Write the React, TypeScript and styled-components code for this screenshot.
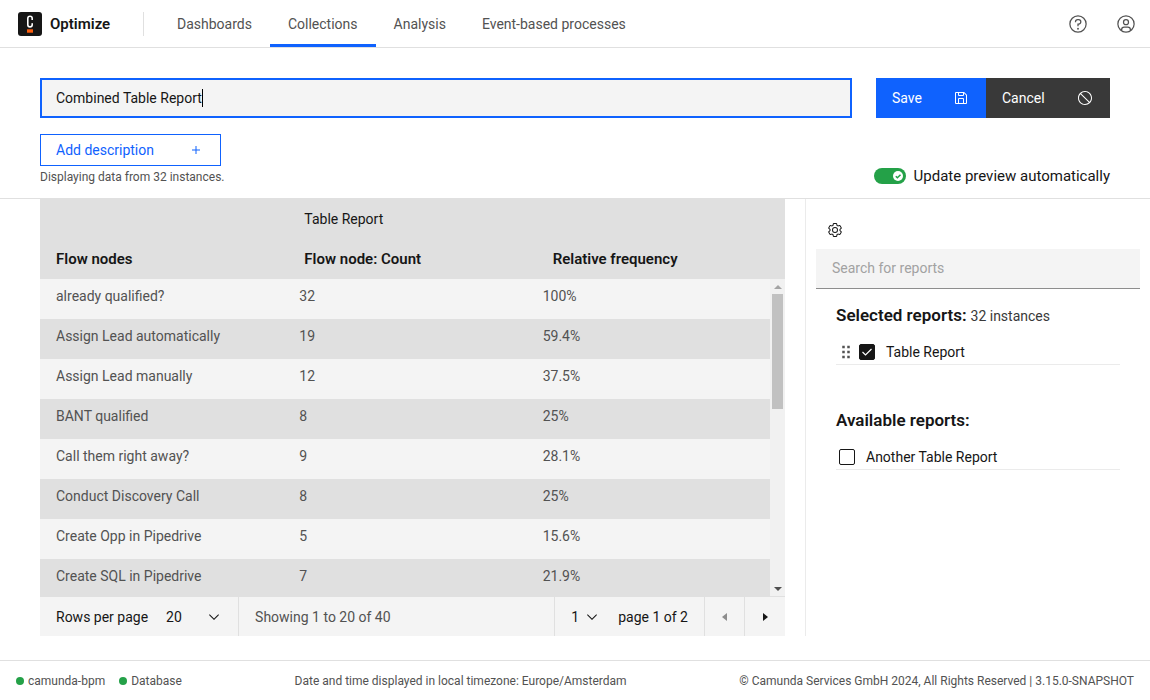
import React, { useLayoutEffect, useRef, useState } from "react";
import styled, { createGlobalStyle, css } from "styled-components";

const GlobalStyle = createGlobalStyle`
  *, *::before, *::after { box-sizing: border-box; }
  html, body { margin: 0; padding: 0; }
  body {
    background: #fff;
    color: #161616;
    font-family: Roboto, "Liberation Sans", sans-serif;
    font-size: 14px;
    line-height: 18px;
  }
  button, input, select { font: inherit; color: inherit; margin: 0; border-radius: 0; }
  button { cursor: pointer; }
`;

const Page = styled.div`
  display: flex;
  flex-direction: column;
  height: 100vh;
`;

const Header = styled.header`
  display: flex;
  flex: none;
  align-items: stretch;
  height: 48px;
  padding: 0 12px 0 18px;
  border-bottom: 1px solid #e0e0e0;
`;

const Brand = styled.a`
  display: flex;
  align-items: center;
  gap: 8px;
  width: 125px;
  color: #161616;
  font-size: 15px;
  font-weight: 600;
  text-decoration: none;
`;

const HeaderDivider = styled.div`
  align-self: center;
  width: 1px;
  height: 24px;
  margin-right: 15px;
  background: #e0e0e0;
`;

const Nav = styled.nav`
  display: flex;
  flex: 1;
`;

const NavLink = styled.a<{ $active?: boolean }>`
  display: flex;
  align-items: center;
  padding: 3px 18px 0;
  border-bottom: 3px solid ${(p) => (p.$active ? "#0f62fe" : "transparent")};
  color: #525252;
  text-decoration: none;
`;

const HeaderActions = styled.div`
  display: flex;
  align-items: center;
  gap: 24px;
`;

const IconButton = styled.button`
  display: flex;
  align-items: center;
  justify-content: center;
  width: 24px;
  height: 24px;
  padding: 0;
  border: 0;
  background: none;
  color: #525252;
`;

const ReportHead = styled.section`
  display: flex;
  flex: none;
  flex-direction: column;
  gap: 16px;
  padding: 30px 40px 13px;
  border-bottom: 1px solid #e0e0e0;
`;

const NameRow = styled.div`
  display: flex;
  gap: 24px;
`;

const NameField = styled.div`
  position: relative;
  flex: 1;
`;

const NameInput = styled.input`
  width: 100%;
  height: 40px;
  padding: 0 14px;
  border: 2px solid #0f62fe;
  background: #f4f4f4;
  outline: none;
  caret-color: transparent;
`;

const Caret = styled.span`
  position: absolute;
  top: 11px;
  width: 1px;
  height: 18px;
  background: #000;
`;

const ButtonSet = styled.div`
  display: flex;
`;

const ActionButton = styled.button<{ $kind: "primary" | "secondary" }>`
  display: flex;
  align-items: center;
  justify-content: space-between;
  width: ${(p) => (p.$kind === "primary" ? 110 : 124)}px;
  height: 40px;
  padding: 0 17px 0 16px;
  border: 0;
  background: ${(p) => (p.$kind === "primary" ? "#0f62fe" : "#393939")};
  color: #fff;
`;

const DetailRow = styled.div`
  display: flex;
  align-items: flex-end;
  justify-content: space-between;
`;

const Details = styled.div`
  display: flex;
  flex-direction: column;
  align-items: flex-start;
  gap: 3px;
`;

const DescriptionButton = styled.button`
  display: flex;
  align-items: center;
  justify-content: space-between;
  width: 181px;
  height: 32px;
  padding: 0 16px 0 15px;
  border: 1px solid #0f62fe;
  background: #fff;
  color: #0f62fe;
`;

const SmallText = styled.span`
  color: #525252;
  font-size: 12px;
  line-height: 16px;
`;

const ToggleLabel = styled.label`
  display: flex;
  align-items: center;
  gap: 8px;
  font-size: 15px;
`;

const Toggle = styled.span`
  position: relative;
  display: block;
  width: 32px;
  height: 16px;
`;

const ToggleInput = styled.input`
  display: block;
  appearance: none;
  width: 32px;
  height: 16px;
  border-radius: 8px;
  background: #8d8d8d;
  &:checked { background: #24a148; }
`;

const ToggleKnob = styled.svg`
  position: absolute;
  top: 3px;
  right: 3px;
  pointer-events: none;
`;

const Content = styled.main`
  display: flex;
  flex: 1;
  min-height: 0;
  padding: 0 0 24px 40px;
`;

const TableArea = styled.section`
  display: flex;
  flex: 1;
  flex-direction: column;
  min-width: 0;
`;

const TableFrame = styled.div`
  position: relative;
  display: flex;
  flex: 1;
  min-height: 0;
`;

const Table = styled.table`
  display: flex;
  flex: 1;
  flex-direction: column;
  min-height: 0;
`;

const THead = styled.thead`
  display: block;
  background: #e0e0e0;
`;

const TBody = styled.tbody`
  display: block;
  flex: 1;
  padding-right: 15px;
  overflow-y: auto;
  scrollbar-width: none;
  background: #f4f4f4;
`;

const Row = styled.tr`
  display: grid;
  grid-template-columns: repeat(3, minmax(0, 1fr));
  height: 40px;
  ${TBody} &:nth-child(even) { background: #e0e0e0; }
`;

const cellBase = css`
  padding: 8px 16px;
  text-align: left;
`;

const HeadCell = styled.th<{ $group?: boolean }>`
  ${cellBase}
  padding-top: 11px;
  font-size: ${(p) => (p.$group ? 14 : 15)}px;
  font-weight: ${(p) => (p.$group ? 400 : 600)};
`;

const Cell = styled.td`
  ${cellBase}
  color: #525252;
`;

/* Drawn over the right edge of the scrolling rows, below the two header rows. */
const ScrollBar = styled.div`
  position: absolute;
  top: 80px;
  right: 0;
  bottom: 0;
  display: flex;
  flex-direction: column;
  align-items: center;
  width: 15px;
  background: #f1f1f1;
`;

const ScrollArrow = styled.span<{ $up?: boolean }>`
  display: flex;
  flex: none;
  align-items: center;
  height: 15px;
  &::before {
    content: "";
    border: 4px solid transparent;
    border-width: ${(p) => (p.$up ? "0 4px 4px" : "4px 4px 0")};
    border-bottom-color: #a3a3a3;
    border-top-color: #505050;
  }
`;

const ScrollTrack = styled.div`
  flex: 1;
  width: 11px;
`;

const ScrollThumb = styled.div`
  height: 40%;
  background: #c1c1c1;
`;

const Pagination = styled.div`
  display: flex;
  flex: none;
  height: 40px;
  padding-right: 1px;
  border-top: 1px solid #e0e0e0;
  background: #f4f4f4;
`;

const PageGroup = styled.div<{ $grow?: boolean }>`
  display: flex;
  flex: ${(p) => (p.$grow ? 1 : "none")};
  align-items: center;
  padding: 0 16px;
  color: ${(p) => (p.$grow ? "#525252" : "#161616")};
  & + & { border-left: 1px solid #e0e0e0; }
`;

const SelectField = styled.span<{ $width: number }>`
  position: relative;
  display: flex;
  align-items: center;
  width: ${(p) => p.$width}px;
`;

const Select = styled.select`
  appearance: none;
  width: 100%;
  height: 38px;
  padding: 0;
  border: 0;
  background: none;
`;

const SelectIcon = styled.span`
  position: absolute;
  right: 0;
  display: flex;
  pointer-events: none;
`;

const RowsLabel = styled.label`
  margin-right: 18px;
`;

const PageCount = styled.span`
  margin-left: 18px;
`;

const PageButton = styled.button`
  display: flex;
  align-items: center;
  justify-content: center;
  width: 40px;
  padding: 0;
  border: 0;
  border-left: 1px solid #e0e0e0;
  background: none;
  color: #161616;
  &:disabled { color: #8d8d8d; }
`;

const Panel = styled.aside`
  flex: 0 0 345px;
  margin-left: 20px;
  padding: 19px 10px 0;
  border-left: 1px solid #ebebeb;
`;

const PanelTools = styled.div`
  display: flex;
  height: 31px;
  padding: 0 7px;
  ${IconButton} { color: #161616; }
`;

const SearchInput = styled.input`
  display: block;
  width: 100%;
  height: 40px;
  padding: 0 16px 1px;
  border: 0;
  border-bottom: 1px solid #8d8d8d;
  background: #f4f4f4;
  outline: none;
  &::placeholder { color: #a2a2a2; opacity: 1; }
`;

const ReportGroup = styled.section`
  margin: 15px 20px 44px;
`;

const GroupTitle = styled.h3`
  display: flex;
  align-items: baseline;
  gap: 4px;
  height: 22px;
  margin: 0;
  font-size: 17px;
  font-weight: 600;
  line-height: 22px;
`;

const GroupNote = styled.span`
  font-size: 14px;
  font-weight: 400;
  color: #393939;
`;

const ReportList = styled.ul`
  margin: 15px 0 0;
  padding: 0;
  list-style: none;
`;

const ReportItem = styled.li<{ $draggable?: boolean }>`
  display: flex;
  align-items: center;
  gap: 3px;
  height: 24px;
  padding: 0 0 2px ${(p) => (p.$draggable ? 0 : 3)}px;
  border-bottom: 1px solid #ebebeb;
`;

const DragHandle = styled.span`
  display: flex;
  color: #525252;
  cursor: grab;
`;

const CheckLabel = styled.label`
  position: relative;
  display: flex;
  align-items: center;
  gap: 11px;
`;

const Checkbox = styled.input`
  appearance: none;
  width: 16px;
  height: 16px;
  border: 1px solid #161616;
  border-radius: 2px;
  &:checked { background: #161616; }
`;

const CheckMark = styled.svg`
  position: absolute;
  left: 0;
  pointer-events: none;
`;

const Footer = styled.footer`
  display: flex;
  flex: none;
  align-items: center;
  justify-content: space-between;
  height: 40px;
  padding: 0 16px;
  border-top: 1px solid #e0e0e0;
`;

const StatusList = styled.div`
  display: flex;
  gap: 14px;
`;

const Status = styled(SmallText)`
  display: flex;
  align-items: center;
  gap: 4px;
  &::before {
    content: "";
    width: 8px;
    height: 8px;
    border-radius: 50%;
    background: #24a148;
  }
`;

const icons = {
  add: "M17 15V8h-2v7H8v2h7v7h2v-7h7v-2z",
  save: "M27.71,9.29l-5-5A1,1,0,0,0,22,4H6A2,2,0,0,0,4,6V26a2,2,0,0,0,2,2H26a2,2,0,0,0,2-2V10A1,1,0,0,0,27.71,9.29ZM12,6h8v4H12Zm8,20H12V18h8Zm2,0V18a2,2,0,0,0-2-2H12a2,2,0,0,0-2,2v8H6V6h4v4a2,2,0,0,0,2,2h8a2,2,0,0,0,2-2V6.41l4,4V26Z",
  cancel: "M16 2C8.2 2 2 8.2 2 16s6.2 14 14 14 14-6.2 14-14S23.8 2 16 2zM4 16C4 13 5.1 10.3 6.9 8.3L23.7 25.1A11.9 11.9 0 0 1 16 28C9.4 28 4 22.6 4 16zM25.1 23.7L8.3 6.9A11.9 11.9 0 0 1 16 4c6.6 0 12 5.4 12 12 0 3-1.1 5.7-2.9 7.7z",
  chevron: "M16 22L6 12 7.4 10.6 16 19.2 24.6 10.6 26 12z",
  caretLeft: "M20 24L10 16 20 8z",
  caretRight: "M12 8L22 16 12 24z",
  help: "M16,2A14,14,0,1,0,30,16,14,14,0,0,0,16,2Zm0,26A12,12,0,1,1,28,16,12,12,0,0,1,16,28ZM17,8H15.5A4.49,4.49,0,0,0,11,12.5V13h2v-.5A2.5,2.5,0,0,1,15.5,10H17a2.5,2.5,0,0,1,0,5H15v4.5h2V17a4.5,4.5,0,0,0,0-9ZM16 22a1.5 1.5 0 1 0 0 3a1.5 1.5 0 1 0 0-3z",
  user: "M16,8a5,5,0,1,0,5,5A5,5,0,0,0,16,8Zm0,8a3,3,0,1,1,3-3A3,3,0,0,1,16,16ZM16,2A14,14,0,1,0,30,16,14,14,0,0,0,16,2ZM10,26.3765V25a3,3,0,0,1,3-3h6a3,3,0,0,1,3,3v1.3765a11.9,11.9,0,0,1-12,0Zm13.9925-1.4507A5,5,0,0,0,19,20H13a5,5,0,0,0-4.9925,4.9258,12,12,0,1,1,15.985,0Z",
  settings: "M27,16.76c0-.25,0-.5,0-.76s0-.51,0-.77l1.92-1.68A2,2,0,0,0,29.3,11L26.94,7a2,2,0,0,0-1.73-1,2,2,0,0,0-.64.1l-2.43.82a11.35,11.35,0,0,0-1.31-.75l-.51-2.52a2,2,0,0,0-2-1.61H13.64a2,2,0,0,0-2,1.61l-.51,2.52a11.48,11.48,0,0,0-1.32.75L7.43,6.06A2,2,0,0,0,6.79,6,2,2,0,0,0,5.06,7L2.7,11a2,2,0,0,0,.41,2.51L5,15.24c0,.25,0,.5,0,.76s0,.51,0,.77L3.11,18.45A2,2,0,0,0,2.7,21L5.06,25a2,2,0,0,0,1.73,1,2,2,0,0,0,.64-.1l2.43-.82a11.35,11.35,0,0,0,1.31.75l.51,2.52a2,2,0,0,0,2,1.61h4.72a2,2,0,0,0,2-1.61l.51-2.52a11.48,11.48,0,0,0,1.32-.75l2.42.82a2,2,0,0,0,.64.1,2,2,0,0,0,1.73-1L29.3,21a2,2,0,0,0-.41-2.51ZM25.21,24l-3.43-1.16a8.86,8.86,0,0,1-2.71,1.57L18.36,28H13.64l-.71-3.55a9.36,9.36,0,0,1-2.7-1.57L6.79,24,4.43,20l2.72-2.4a8.9,8.9,0,0,1,0-3.13L4.43,12,6.79,8l3.43,1.16a8.86,8.86,0,0,1,2.71-1.57L13.64,4h4.72l.71,3.55a9.36,9.36,0,0,1,2.7,1.57L25.21,8,27.57,12l-2.72,2.4a8.9,8.9,0,0,1,0,3.13L27.57,20ZM16,22a6,6,0,1,1,6-6A5.94,5.94,0,0,1,16,22Zm0-10a3.91,3.91,0,0,0-4,4,3.91,3.91,0,0,0,4,4,3.91,3.91,0,0,0,4-4A3.91,3.91,0,0,0,16,12Z",
  draggable: "M10 6h4v4h-4zM18 6h4v4h-4zM10 14h4v4h-4zM18 14h4v4h-4zM10 22h4v4h-4zM18 22h4v4h-4z",
};

function Icon({ name, size = 16 }: { name: keyof typeof icons; size?: number }) {
  return (
    <svg width={size} height={size} viewBox="0 0 32 32" fill="currentColor" aria-hidden="true">
      <path d={icons[name]} />
    </svg>
  );
}

function Logo() {
  return (
    <svg width="24" height="24" viewBox="0 0 24 24" aria-hidden="true">
      <rect width="24" height="24" rx="3" fill="#161616" />
      <rect x="9.8" y="4.3" width="4.4" height="10.6" rx="2.2" fill="none" stroke="#fff" strokeWidth="1.6" />
      <rect x="12.5" y="8" width="3" height="3.2" fill="#161616" />
      <rect x="9" y="17.3" width="6" height="3.4" fill="#fc5d0d" />
    </svg>
  );
}

function ReportName() {
  const [name, setName] = useState("Combined Table Report");
  const [caretLeft, setCaretLeft] = useState(16);
  const input = useRef<HTMLInputElement>(null);

  useLayoutEffect(() => {
    const context = document.createElement("canvas").getContext("2d");
    if (!context || !input.current) return;
    const style = getComputedStyle(input.current);
    context.font = `${style.fontSize} ${style.fontFamily}`;
    setCaretLeft(16 + Math.round(context.measureText(name).width));
  }, [name]);

  return (
    <NameField>
      <NameInput ref={input} aria-label="Report name" value={name} onChange={(e) => setName(e.target.value)} />
      <Caret style={{ left: caretLeft }} />
    </NameField>
  );
}

function ReportCheck({ name, checked: initial = false }: { name: string; checked?: boolean }) {
  const [checked, setChecked] = useState(initial);
  return (
    <CheckLabel>
      <Checkbox type="checkbox" checked={checked} onChange={(e) => setChecked(e.target.checked)} />
      {checked && (
        <CheckMark width="16" height="16" viewBox="0 0 16 16" aria-hidden="true">
          <path d="M3.5 8l3 3L12.5 5" fill="none" stroke="#fff" strokeWidth="1.2" />
        </CheckMark>
      )}
      {name}
    </CheckLabel>
  );
}

const navItems = ["Dashboards", "Collections", "Analysis", "Event-based processes"];

const rows = [
  ["already qualified?", "32", "100%"],
  ["Assign Lead automatically", "19", "59.4%"],
  ["Assign Lead manually", "12", "37.5%"],
  ["BANT qualified", "8", "25%"],
  ["Call them right away?", "9", "28.1%"],
  ["Conduct Discovery Call", "8", "25%"],
  ["Create Opp in Pipedrive", "5", "15.6%"],
  ["Create SQL in Pipedrive", "7", "21.9%"],
];

export default function App() {
  return (
    <Page>
      <GlobalStyle />
      <Header>
        <Brand href="#"><Logo />Optimize</Brand>
        <HeaderDivider />
        <Nav>
          {navItems.map((item) => (
            <NavLink key={item} href="#" $active={item === "Collections"}>{item}</NavLink>
          ))}
        </Nav>
        <HeaderActions>
          <IconButton aria-label="Help"><Icon name="help" size={20} /></IconButton>
          <IconButton aria-label="Profile"><Icon name="user" size={20} /></IconButton>
        </HeaderActions>
      </Header>

      <ReportHead>
        <NameRow>
          <ReportName />
          <ButtonSet>
            <ActionButton $kind="primary">Save<Icon name="save" /></ActionButton>
            <ActionButton $kind="secondary">Cancel<Icon name="cancel" /></ActionButton>
          </ButtonSet>
        </NameRow>
        <DetailRow>
          <Details>
            <DescriptionButton>Add description<Icon name="add" /></DescriptionButton>
            <SmallText>Displaying data from 32 instances.</SmallText>
          </Details>
          <ToggleLabel>
            <Toggle>
              <ToggleInput type="checkbox" role="switch" defaultChecked />
              <ToggleKnob width="10" height="10" viewBox="0 0 10 10" aria-hidden="true">
                <circle cx="5" cy="5" r="5" fill="#fff" />
                <path d="M2.8 5.2l1.6 1.6L7.5 3.7" fill="none" stroke="#24a148" strokeWidth="1.5" />
              </ToggleKnob>
            </Toggle>
            Update preview automatically
          </ToggleLabel>
        </DetailRow>
      </ReportHead>

      <Content>
        <TableArea>
          <TableFrame>
            <Table>
              <THead>
                <Row>
                  <HeadCell $group as="td" />
                  <HeadCell $group>Table Report</HeadCell>
                </Row>
                <Row>
                  <HeadCell>Flow nodes</HeadCell>
                  <HeadCell>Flow node: Count</HeadCell>
                  <HeadCell>Relative frequency</HeadCell>
                </Row>
              </THead>
              <TBody>
                {rows.map((row) => (
                  <Row key={row[0]}>
                    {row.map((value, column) => <Cell key={column}>{value}</Cell>)}
                  </Row>
                ))}
              </TBody>
            </Table>
            <ScrollBar aria-hidden="true">
              <ScrollArrow $up />
              <ScrollTrack><ScrollThumb /></ScrollTrack>
              <ScrollArrow />
            </ScrollBar>
          </TableFrame>
          <Pagination>
            <PageGroup>
              <RowsLabel htmlFor="page-size">Rows per page</RowsLabel>
              <SelectField $width={56}>
                <Select id="page-size" defaultValue="20"><option>20</option></Select>
                <SelectIcon><Icon name="chevron" /></SelectIcon>
              </SelectField>
            </PageGroup>
            <PageGroup $grow>Showing 1 to 20 of 40</PageGroup>
            <PageGroup>
              <SelectField $width={29}>
                <Select aria-label="Page number" defaultValue="1"><option>1</option></Select>
                <SelectIcon><Icon name="chevron" /></SelectIcon>
              </SelectField>
              <PageCount>page 1 of 2</PageCount>
            </PageGroup>
            <PageButton aria-label="Previous page" disabled><Icon name="caretLeft" /></PageButton>
            <PageButton aria-label="Next page"><Icon name="caretRight" /></PageButton>
          </Pagination>
        </TableArea>

        <Panel>
          <PanelTools>
            <IconButton aria-label="Settings"><Icon name="settings" /></IconButton>
          </PanelTools>
          <SearchInput type="text" aria-label="Search for reports" placeholder="Search for reports" />
          <ReportGroup>
            <GroupTitle>Selected reports: <GroupNote>32 instances</GroupNote></GroupTitle>
            <ReportList>
              <ReportItem $draggable>
                <DragHandle><Icon name="draggable" size={20} /></DragHandle>
                <ReportCheck name="Table Report" checked />
              </ReportItem>
            </ReportList>
          </ReportGroup>
          <ReportGroup>
            <GroupTitle>Available reports:</GroupTitle>
            <ReportList>
              <ReportItem><ReportCheck name="Another Table Report" /></ReportItem>
            </ReportList>
          </ReportGroup>
        </Panel>
      </Content>

      <Footer>
        <StatusList>
          <Status>camunda-bpm</Status>
          <Status>Database</Status>
        </StatusList>
        <SmallText>Date and time displayed in local timezone: Europe/Amsterdam</SmallText>
        <SmallText>© Camunda Services GmbH 2024, All Rights Reserved | 3.15.0-SNAPSHOT</SmallText>
      </Footer>
    </Page>
  );
}
